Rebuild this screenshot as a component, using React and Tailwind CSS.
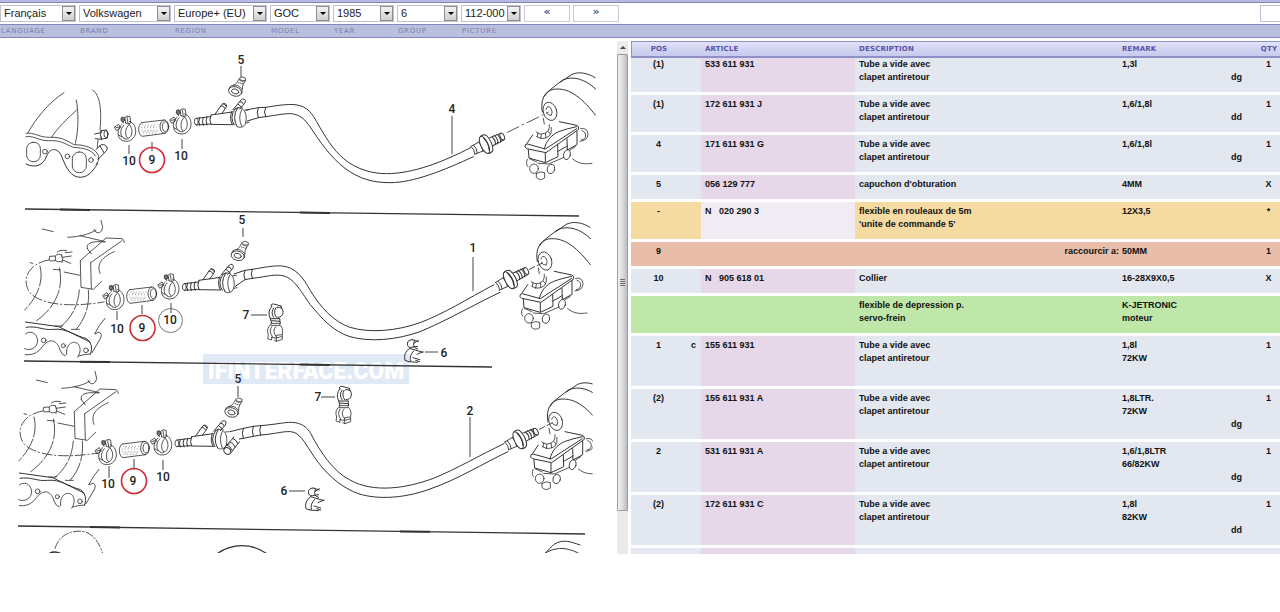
import React, { useLayoutEffect, useRef } from 'react';

const fields = [
  { id: 'language', label: 'LANGUAGE', value: 'Français', width: 'w-[76px]' },
  { id: 'brand', label: 'BRAND', value: 'Volkswagen', width: 'w-[92px]' },
  { id: 'region', label: 'REGION', value: 'Europe+ (EU)', width: 'w-[93px]' },
  { id: 'model', label: 'MODEL', value: 'GOC', width: 'w-[60px]' },
  { id: 'year', label: 'YEAR', value: '1985', width: 'w-[61px]' },
  { id: 'group', label: 'GROUP', value: '6', width: 'w-[61px]' },
  { id: 'picture', label: 'PICTURE', value: '112-000', width: 'w-[60px]' },
];

const tube = 'Tube a vide avec\nclapet antiretour';

const parts = [
  { pos: '(1)', article: '533 611 931', description: tube, remark: '1,3l', note: '\ndg', qty: '1' },
  { pos: '(1)', article: '172 611 931 J', description: tube, remark: '1,6/1,8l', note: '\ndd', qty: '1' },
  { pos: '4', article: '171 611 931 G', description: tube, remark: '1,6/1,8l', note: '\ndg', qty: '1' },
  { pos: '5', article: '056 129 777', description: "capuchon d'obturation", remark: '4MM', qty: 'X' },
  { pos: '-', article: 'N   020 290 3', description: "flexible en rouleaux de 5m\n'unite de commande 5'", remark: '12X3,5', qty: '*', tone: 'gold' },
  { pos: '9', description: 'raccourcir a:', remark: '50MM', qty: '1', tone: 'red', alignRight: true },
  { pos: '10', article: 'N   905 618 01', description: 'Collier', remark: '16-28X9X0,5', qty: 'X' },
  { description: 'flexible de depression p.\nservo-frein', remark: 'K-JETRONIC\nmoteur', tone: 'green' },
  { pos: '1', flag: 'c', article: '155 611 931', description: tube, remark: '1,8l\n72KW', note: '\n\n\u00a0', qty: '1' },
  { pos: '(2)', article: '155 611 931 A', description: tube, remark: '1,8LTR.\n72KW', note: '\n\ndg', qty: '1' },
  { pos: '2', article: '531 611 931 A', description: tube, remark: '1,6/1,8LTR\n66/82KW', note: '\n\ndg', qty: '1' },
  { pos: '(2)', article: '172 611 931 C', description: tube, remark: '1,8l\n82KW', note: '\n\ndd', qty: '1' },
  { pos: '', article: '', description: '', remark: '', note: '\n\u00a0', qty: '' },
];

const tones = {
  plain: { row: 'bg-[#e2e7f0]', article: 'bg-[#e6d8e8]' },
  gold: { row: 'bg-[#f5daa2]', article: 'bg-[#f1ebf3]' },
  red: { row: 'bg-[#e8bda9]', article: '' },
  green: { row: 'bg-[#bfe7a9]', article: '' },
};

const App = () => (
  <div className="bg-white font-['Liberation_Sans',Arial,sans-serif] text-[#111]">
    <Toolbar />
    <main className="mt-[3px] grid h-[calc(100vh-99px)] grid-cols-[628fr_649fr] gap-x-[3px] overflow-hidden">
      <div className="flex min-w-0 overflow-hidden">
        <div className="min-w-0 flex-1">
          <Diagram />
        </div>
        <ScrollTrack />
      </div>
      <PartsTable />
    </main>
  </div>
);

const Toolbar = () => (
  <header>
    <div className="h-[3px] border-b border-[#8385b8] bg-[#b4bbdf]" />
    <div className="flex h-[21px] items-center gap-[3px]">
      {fields.map((field) => (
        <div key={field.id} className={`${field.width} relative h-[17px] shrink-0`}>
          <select
            id={field.id}
            defaultValue={field.value}
            className="block h-full w-full appearance-none rounded-none border border-[#bfc1d0] bg-white pr-3 pl-[3px] text-[11px] leading-[15px] text-[#222]"
          >
            <option>{field.value}</option>
          </select>
          <span className="pointer-events-none absolute top-px right-px flex h-[15px] w-[13px] items-center justify-center border border-[#8f8f8f] bg-linear-to-b from-[#f4f4f4] to-[#cfcfcf]">
            <svg viewBox="0 0 6 3" className="h-[3px] w-[6px]"><path d="M0 0H6L3 3Z" fill="#000" /></svg>
          </span>
        </div>
      ))}
      <button type="button" aria-label="Previous picture" className="flex h-[17px] w-[46px] items-center justify-center border border-[#c9cbd9] bg-white pb-[2px] font-['DejaVu_Sans',Verdana,sans-serif] text-[11px] font-bold text-[#465b8a]">«</button>
      <button type="button" aria-label="Next picture" className="flex h-[17px] w-[46px] items-center justify-center border border-[#c9cbd9] bg-white pb-[2px] font-['DejaVu_Sans',Verdana,sans-serif] text-[11px] font-bold text-[#465b8a]">»</button>
      <input type="text" aria-label="Part number" className="ml-auto h-[17px] w-5 border border-r-0 border-[#bfc1d0] bg-white" />
    </div>
    <div className="flex h-[14px] items-center gap-[3px] border-y border-[#8487bb] bg-[#b9c0de] pt-px font-['DejaVu_Sans',Verdana,sans-serif] text-[7px] tracking-widest text-[#7d81ad]">
      {fields.map((field) => (
        <label key={field.id} htmlFor={field.id} className={`${field.width} shrink-0 pl-px`}>
          {field.label}
        </label>
      ))}
    </div>
  </header>
);

const ScrollTrack = () => (
  <div className="flex w-[11px] shrink-0 flex-col bg-[#ebebed]">
    <div className="flex h-[13px] items-center justify-center">
      <svg viewBox="0 0 6 3" className="h-[3px] w-[6px]"><path d="M0 3H6L3 0Z" fill="#444" /></svg>
    </div>
    <div className="flex h-[89%] items-center justify-center rounded-[1px] border border-[#9c9ca2] bg-linear-to-r from-[#f2f2f4] via-[#dcdce0] to-[#bcbcc4]">
      <svg viewBox="0 0 5 7" className="h-[7px] w-[5px]"><path d="M0 .5H5M0 2.5H5M0 4.5H5M0 6.5H5" stroke="#6c6c74" /></svg>
    </div>
  </div>
);

const PartsTable = () => {
  const pane = useRef(null);

  // first row starts slightly under the sticky header
  useLayoutEffect(() => {
    pane.current.scrollTop = 3;
  }, []);

  const head = 'sticky top-0 z-10 h-[17px] border-t border-b-2 border-[#8f90c8] bg-linear-to-b from-[#e2e2f8] via-[#d3d4f2] to-[#c8caee] p-0';

  return (
    <div ref={pane} className="min-w-0 overflow-hidden">
      <table className="w-full table-fixed border-separate border-spacing-0 text-[9px] leading-[13px] font-bold">
        <colgroup>
          <col className="w-[55px]" />
          <col className="w-[15px]" />
          <col className="w-[154px]" />
          <col />
          <col className="w-[100px]" />
          <col className="w-[35px]" />
          <col className="w-[26px]" />
        </colgroup>
        <thead>
          <tr className="text-left font-['DejaVu_Sans',Verdana,sans-serif] text-[7px] leading-[14px] tracking-wide text-[#5654a4]">
            <th className={`${head} border-l text-center`}>POS</th>
            <th className={head}></th>
            <th className={`${head} pl-1`}>ARTICLE</th>
            <th className={`${head} pl-1`}>DESCRIPTION</th>
            <th className={`${head} pl-[3px]`}>REMARK</th>
            <th className={head}></th>
            <th className={`${head} pl-1 text-center`}>QTY</th>
          </tr>
        </thead>
        <tbody>
          {parts.map((part, index) => (
            <PartRow key={index} part={part} />
          ))}
        </tbody>
      </table>
    </div>
  );
};

const PartRow = ({ part }) => {
  const tone = tones[part.tone || 'plain'];
  const cell = 'border-b-[3px] border-white pt-[3px] pb-2 align-top whitespace-pre';
  return (
    <tr className={tone.row}>
      <td className={`${cell} text-center`}>{part.pos}</td>
      <td className={`${cell} pr-[5px] text-right`}>{part.flag}</td>
      <td className={`${cell} ${tone.article} pl-1`}>{part.article}</td>
      <td className={`${cell} pl-1 ${part.alignRight ? 'text-right' : ''}`}>{part.description}</td>
      <td className={`${cell} pl-[3px]`}>{part.remark}</td>
      <td className={`${cell} text-center`}>{part.note}</td>
      <td className={`${cell} pl-[3px] text-center`}>{part.qty}</td>
    </tr>
  );
};

/* Exploded view. Drawings are made at three times their size and scaled down. */

const labels = [
  ['5', 241, 64, 'M241 66V77'],
  ['10', 129, 165, 'M129 145V154'],
  ['9', 152, 164, 'M152 142V151'],
  ['10', 181, 160, 'M182 139V149'],
  ['4', 452, 113, 'M452 116V154'],
  ['5', 242, 224, 'M243 228V237'],
  ['10', 117, 333, 'M117 311V320'],
  ['9', 142, 332, 'M142 305V314'],
  ['10', 170, 324, 'M171 303V313'],
  ['1', 473, 252, 'M473 257V291'],
  ['7', 246, 319, 'M251 315H267'],
  ['6', 444, 357, 'M425 352H438'],
  ['5', 238, 383, 'M238 386V397'],
  ['10', 108, 488, 'M109 466V478'],
  ['9', 133, 485, 'M134 459V470'],
  ['10', 163, 481, 'M163 460V470'],
  ['2', 470, 415, 'M470 417V457'],
  ['7', 318, 401, 'M321 397H335'],
  ['6', 284, 495, 'M289 491H305'],
];

const At = ({ x, y, children }) => <g transform={`translate(${x} ${y})`}>{children}</g>;

const Clamp = ({ x, y }) => (
  <At x={x} y={y}>
    <path d="M-14 -20C-30 -8 -30 20 -14 28C0 35 20 30 26 10C30 -8 22 -26 8 -29M-9 -17C-20 -6 -22 14 -8 22M8 -20C-6 -10 -6 16 4 22C16 20 22 -4 8 -20M-8 22C-2 27 6 24 4 22M-24 12L-14 18" />
    <path d="M-3 -24L-6 -40Q0 -48 10 -43L12 -24Q4 -18 -3 -24M1 -41L4 -23M-10 -24L-14 -38Q-8 -42 -6 -36" />
    <path d="M-16 -40Q-20 -30 -12 -27L-5 -32L-8 -40Z" fill="#777" />
    <path d="M-36 -12L-24 -20L-18 -10L-30 -2ZM-32 -10L-22 -12" />
  </At>
);

const Sleeve = ({ x, y }) => (
  <At x={x} y={y}>
    <path d="M-35 -17L32 -25M-35 -17C-48 -12 -47 20 -33 24L35 15" />
    <ellipse cx="33" cy="-5" rx="13" ry="20" />
    <ellipse cx="36" cy="-5" rx="9" ry="15" />
    <path d="M-32 -10H14M-36 -2H10M-34 6H12M-30 14H10M-26 -6H6M-28 10H14" strokeWidth="2" strokeDasharray="1 8" stroke="#777" />
  </At>
);

const Plug = ({ x, y }) => (
  <At x={x} y={y}>
    <ellipse rx="20" ry="14" cx="-2" cy="3" transform="rotate(15)" />
    <ellipse rx="11" ry="7" cx="-2" cy="3" transform="rotate(15)" />
    <path d="M-21 -6Q-20 -14 -10 -16Q6 -20 18 -4V6M-8 -16C4 -20 4 -28 10 -37Q18 -46 29 -37Q30 -30 26 -26C20 -18 18 -10 19 -4M10 -34Q18 -28 28 -30" />
    <path d="M12 -30L24 -26M8 -24L22 -20" strokeDasharray="2 4" />
  </At>
);

const Valve = ({ x, y }) => (
  <At x={x} y={y}>
    <ellipse cx="6" cy="0" rx="6" ry="10" />
    <path d="M6 -10L48 -15M6 10L48 7M16 -12Q10 0 16 11M27 -13Q21 0 27 11M38 -15Q32 -2 38 10" strokeWidth="3" />
    <path d="M50 -20L114 -29M50 8L116 9M50 -20Q43 -4 50 8" strokeWidth="3" />
    <path d="M62 -22L80 -48Q88 -60 97 -50Q98 -46 92 -38L82 -24M80 -48Q86 -50 92 -40M86 -54Q92 -52 96 -46" strokeWidth="3" />
    <path d="M116 -36L136 -60Q146 -74 153 -64Q154 -58 150 -54L136 -38M136 -60Q144 -62 148 -52M132 -52L144 -42" strokeWidth="3" />
    <path d="M112 -30Q104 -8 114 8M122 -38Q104 -12 120 10M130 -42Q112 -12 128 14M122 -38L130 -42" strokeWidth="3" />
    <path d="M130 -42C150 -46 160 -20 154 4C150 18 134 20 128 14M142 -36Q130 -12 142 14" />
    <path d="M152 -34L162 -35M154 4L164 2" />
  </At>
);

const HoseEnd = ({ x, y, spin }) => (
  <g transform={`translate(${x} ${y}) rotate(${spin})`}>
    <path d="M-42 -13L-12 -15M-42 13L-12 15M-42 -13Q-36 0 -42 13M-34 -13Q-28 0 -34 13M-16 -15Q-10 0 -16 15" />
    <ellipse cx="-4" rx="11" ry="28" fill="#fff" strokeWidth="3" />
    <path d="M-4 -28Q6 -32 13 -24Q22 0 13 24Q6 32 -4 28M2 -20Q10 0 2 20" strokeWidth="3" />
    <path d="M18 -13L54 -11M18 13L54 11M26 -13Q34 0 26 13M34 -14Q42 0 34 14M43 -13Q51 0 43 13" strokeWidth="3" />
    <ellipse cx="55" rx="6" ry="11" strokeWidth="3" />
  </g>
);

const Booster = ({ x, y }) => (
  <At x={x} y={y}>
    <path d="M697 186C690 150 704 124 730 118C782 110 822 152 856 195" strokeWidth="3" />
    <path d="M704 138Q710 126 722 118L758 90C790 76 826 88 857 117M752 96L786 73C806 64 834 69 855 83" strokeWidth="3" />
    <ellipse cx="720" cy="184" rx="20" ry="28" transform="rotate(-18 720 184)" />
    <path d="M708 178Q712 164 722 174Q730 186 724 196Q714 198 709 188" />
    <path d="M700 205L703 222M678 245Q686 256 704 250Q720 244 718 224M680 260Q700 272 718 258Q726 250 724 232M684 248L682 260M694 254L692 266M706 250L708 263M714 244L722 252" />
    <path d="M748 215L800 226Q808 228 806 238L708 308L650 296Q642 292 646 284L652 282L706 297L800 236M668 255L651 280M703 297C708 274 722 256 746 245Q770 236 800 230" strokeWidth="3" />
    <path d="M655 299L657 324L706 338L744 320L743 284M706 310V336M771 266L772 300L801 284V244M744 304L772 288" strokeWidth="3" />
    <path d="M652 328Q646 342 654 350M658 326L680 336M684 340L716 342L762 322M780 300L796 290" />
    <path d="M812 236Q832 232 834 252Q834 272 810 274M816 242Q830 246 826 262Q822 270 814 270" />
    <ellipse cx="672" cy="356" rx="13" ry="14" />
    <ellipse cx="723" cy="357" rx="11" ry="14" transform="rotate(15 723 357)" />
    <path d="M679 370V382Q690 394 704 384V368Q692 362 680 370" />
    <ellipse cx="771" cy="314" rx="10" ry="15" transform="rotate(15 771 314)" />
    <path d="M788 327C806 342 826 343 846 340" />
  </At>
);

const Engine = ({ x, y }) => (
  <At x={x} y={y}>
    <path d="M127 57L160 65M203 82C240 80 270 72 288 60M282 58Q286 70 298 68Q306 66 308 52L303 31M240 77L316 95" />
    <path d="M241 152L318 84L366 86Q374 90 373 97M241 152L243 232L280 238L305 214M272 158L274 236M272 158L366 92M300 190C288 160 308 140 343 125M262 116C256 98 280 92 314 96M262 116L274 132" />
    <path d="M150 139L166 138V152L150 153Q144 146 150 139M166 138Q174 128 186 136M166 152Q174 160 184 154M184 134Q192 144 186 158M186 142L214 138M188 150L212 160M172 126Q180 118 200 122M196 128L216 126" />
    <path d="M146 150C90 160 62 204 88 246C118 282 200 294 312 276" strokeDasharray="30 8 4 8" />
    <path d="M120 168C132 214 112 262 74 300M178 174C192 232 168 290 110 332M160 178L182 180M192 186L240 196M238 240C234 290 212 326 182 350M265 240C270 290 252 334 226 360" strokeDasharray="60 7" />
    <path d="M315 325Q296 346 284 372L298 366Q308 372 302 384L276 428M164 348H188M214 358H238M90 158L98 160" />
    <path d="M76 336L176 350L270 396M78 352C110 346 130 362 160 358C200 354 226 378 260 386Q282 404 272 432" strokeWidth="3" />
    <path d="M76 372C86 362 110 364 113 392C112 414 90 424 74 416M76 434C110 438 124 414 130 406C160 376 176 404 180 420Q186 436 196 438M200 434C196 400 222 388 236 404C244 416 240 434 232 442M236 438Q256 432 272 432" />
    <circle cx="131" cy="391" r="7" />
    <circle cx="190" cy="407" r="6" />
    <circle cx="258" cy="421" r="7" />
  </At>
);

const ClipSeven = ({ x, y }) => (
  <At x={x} y={y}>
    <path d="M-10 -50Q-16 -58 -4 -58L18 -52M-10 -50Q-24 -36 -14 -14H14M18 -52L20 -44M-4 -46Q-14 -32 -4 -18M2 -46Q-6 -32 4 -18M6 -48Q26 -50 24 -32Q22 -18 8 -18M-14 -14L-10 0M14 -14L16 0M-10 -8L14 -6" strokeWidth="3" />
    <path d="M-12 0H16M-12 6H14M-10 0Q-28 14 -20 34L-22 46L-10 50V42M14 4Q26 12 22 32L22 48L4 54L-2 50M-10 10Q-20 24 -8 40M2 10Q-10 24 4 40M4 54V36L20 34M-10 42L2 44M4 44L20 40" />
  </At>
);

const ClipSix = ({ x, y }) => (
  <At x={x} y={y}>
    <path d="M2 -36Q-16 -36 -12 -18Q-8 -10 4 -14M2 -36L20 -30M8 -32Q2 -22 8 -14M8 -26L20 -34M4 -14L18 -16M10 -12L18 -8" strokeWidth="3" />
    <path d="M-6 -10Q-26 4 -20 26L-8 30M-6 -10L14 -4M14 -4L34 2M6 -2Q-8 12 -4 28M16 8L34 0M-8 30L18 32M4 18L24 24M12 26L24 30" strokeWidth="3" />
  </At>
);

const Diagram = () => (
  <svg viewBox="0 41 617 512" className="block w-full" role="img" aria-label="Vacuum hose diagram">
    <clipPath id="sheet">
      <rect x="0" y="0" width="1778" height="700" />
    </clipPath>

    <rect x="203" y="354" width="206" height="30" fill="#e0e9f6" />
    <text x="306" y="379" textAnchor="middle" fill="#fff" fontSize="23" fontWeight="900" fontFamily="Roboto, 'Liberation Sans', sans-serif">IFINTERFACE.COM</text>

    <g fill="none" stroke="#333" strokeWidth="1.3">
      <path d="M25 209L579 216M24 361L492 367M18 526L585 534" />
      <path d="M60 209.500L90 209.900M300 212.500L330 212.900M80 361.700L110 362.100M300 364.500L330 364.900M90 527L120 527.400M400 531.400L430 531.800" strokeWidth="2" />
    </g>

    {/* top assembly */}
    <g transform="translate(0 50) scale(.33333)" fill="none" stroke="#333" strokeWidth="2.500" strokeLinecap="round" strokeLinejoin="round">
      <path d="M192 128C145 158 106 208 84 248M229 150C236 190 236 240 226 280M230 180C200 208 172 234 155 262M278 120C300 134 306 180 300 240M294 270L292 292" />
      <path d="M78 250C104 246 114 262 148 262C184 260 200 272 222 284C250 284 286 292 296 318Q300 330 288 344M78 260C102 256 114 272 146 272C182 270 196 282 220 292C250 294 276 298 286 318" />
      <path d="M78 342C106 356 130 346 140 318C152 288 178 296 186 322C198 352 212 382 242 382C270 380 282 356 294 340" strokeWidth="3" />
      <rect x="80" y="277" width="41" height="58" rx="19" />
      <rect x="217" y="306" width="42" height="62" rx="20" />
      <circle cx="135" cy="305" r="7" />
      <circle cx="202" cy="319" r="7" />
      <circle cx="273" cy="330" r="7" />
      <path d="M284 252L302 248V242L318 240Q328 250 322 264L304 268V262M286 266L304 268M304 244Q298 254 304 266" strokeWidth="3" />
      <ellipse cx="318" cy="252" rx="6" ry="11" />
      <path d="M288 298L304 284Q318 282 322 294Q322 302 314 308L294 328M300 288Q306 298 312 308" strokeWidth="3" />

      <Clamp x={380} y={243} />
      <Sleeve x={460} y={235} />
      <Clamp x={546} y={221} />
      <Plug x={708} y={122} />
      <Valve x={583} y={215} />
      <path d="M738 180L775 173L797 172M742 213L775 203L797 200M775 173Q768 188 775 203M797 172Q790 186 797 200" strokeWidth="3" />
      <path d="M797 172C835 166 860 162 885 164C925 168 938 195 950 215C975 260 1000 300 1030 325C1070 360 1120 371 1160 371C1240 371 1330 335 1412 293" strokeWidth="3" />
      <path d="M797 200C830 196 860 188 880 192C905 197 915 210 930 230C960 275 990 320 1035 355C1080 388 1120 398 1170 398C1240 398 1330 362 1420 320" strokeWidth="3" />
      <HoseEnd x={1457} y={283} spin={-25} />
      <path d="M1522 247L1645 187" strokeDasharray="38 12 4 12" />
      <Booster x={930} y={0} />
    </g>

    {/* middle assembly */}
    <g transform="translate(0 210) scale(.33333)" fill="none" stroke="#333" strokeWidth="2.500" strokeLinecap="round" strokeLinejoin="round">
      <Engine x={0} y={0} />
      <Clamp x={345} y={268} />
      <Sleeve x={424} y={256} />
      <Clamp x={510} y={236} />
      <Plug x={716} y={135} />
      <Valve x={547} y={231} />
      <path d="M702 192L735 181L757 178M706 229L735 209L757 205M735 181Q728 195 735 209M757 178Q750 192 757 205" strokeWidth="3" />
      <path d="M757 178C795 172 820 166 845 168C885 171 908 200 930 240C960 290 1000 335 1050 352C1110 370 1190 363 1260 338C1330 312 1400 268 1482 224" strokeWidth="3" />
      <path d="M757 205C790 202 815 193 842 196C880 200 900 240 930 283C965 325 1000 365 1050 380C1110 397 1190 390 1260 365C1340 332 1420 285 1500 247" strokeWidth="3" />
      <HoseEnd x={1530} y={209} spin={-28} />
      <path d="M1588 178L1634 156" strokeDasharray="18 8" />
      <Booster x={915} y={-31} />
      <ClipSeven x={825} y={340} />
      <ClipSix x={1235} y={425} />
    </g>

    {/* bottom assembly */}
    <g transform="translate(0 365) scale(.33333)" fill="none" stroke="#333" strokeWidth="2.500" strokeLinecap="round" strokeLinejoin="round">
      <Engine x={-18} y={-12} />
      <Clamp x={322} y={268} />
      <Sleeve x={402} y={254} />
      <Clamp x={488} y={239} />
      <Plug x={697} y={140} />
      <Valve x={525} y={235} />
      <path d="M690 200L730 190L760 184L782 182M718 222L730 220L760 214L782 210M730 190Q724 205 730 220M760 184Q754 199 760 214M782 182Q776 196 782 210" strokeWidth="3" />
      <path d="M702 216L672 250M718 230L694 262M698 220Q708 222 714 236M689 230Q699 232 705 246M680 240Q690 242 697 256" strokeWidth="3" />
      <ellipse cx="682" cy="258" rx="11" ry="9" transform="rotate(40 682 258)" strokeWidth="3" />
      <path d="M782 182C830 178 850 172 875 172C905 173 922 188 932 205C960 260 1000 320 1050 345C1120 385 1220 370 1300 340C1370 312 1440 270 1512 236" strokeWidth="3" />
      <path d="M782 210C820 208 850 198 872 200C900 202 915 235 930 256C960 305 1000 350 1050 375C1110 408 1210 402 1290 372C1370 345 1450 295 1524 260" strokeWidth="3" />
      <HoseEnd x={1558} y={224} spin={-26} />
      <path d="M1618 193L1664 170" strokeDasharray="18 8" />
      <g clipPath="url(#sheet)">
        <Booster x={947} y={-15} />
      </g>
      <ClipSeven x={1030} y={122} />
      <ClipSix x={938} y={405} />
      <path d="M165 550C180 505 220 494 252 500C286 508 302 545 308 566" strokeDasharray="22 6 5 6" />
      <path d="M148 565Q166 556 187 568M652 566C696 534 756 534 800 566" strokeWidth="4" />
      <path d="M1636 564L1662 538C1690 520 1716 532 1740 540M1636 564C1676 540 1712 552 1738 566" strokeWidth="3" />
    </g>

    <g fill="none" stroke="#444" strokeWidth="1">
      {labels.map(([text, x, y, line]) => (
        <path key={`${text}-${x}-${y}`} d={line} />
      ))}
      <circle cx="170.500" cy="320.500" r="12" stroke="#777" />
    </g>
    <g fill="none" stroke="#cc2f38" strokeWidth="1.600">
      <circle cx="152" cy="160" r="12.500" />
      <circle cx="142.500" cy="328" r="12.500" />
      <circle cx="134" cy="481" r="12.500" />
    </g>
    <g fill="#222" fontSize="12" fontWeight="500" textAnchor="middle" fontFamily="Roboto, 'Liberation Sans', sans-serif">
      {labels.map(([text, x, y]) => (
        <text key={`${text}-${x}-${y}`} x={x} y={y}>{text}</text>
      ))}
    </g>
  </svg>
);

export default App;
